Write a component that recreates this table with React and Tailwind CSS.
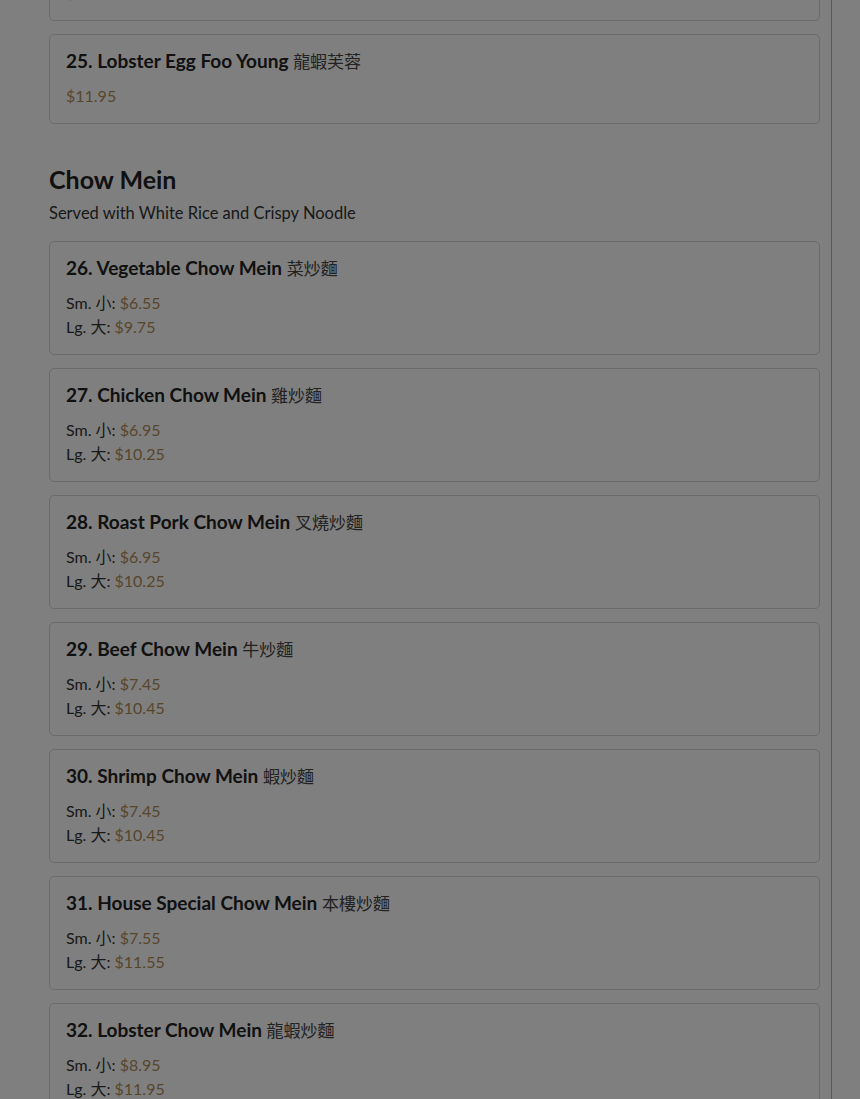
const items = [
  { no: 26, name: 'Vegetable Chow Mein', zh: '菜炒麵', sm: '$6.55', lg: '$9.75' },
  { no: 27, name: 'Chicken Chow Mein', zh: '雞炒麵', sm: '$6.95', lg: '$10.25' },
  { no: 28, name: 'Roast Pork Chow Mein', zh: '叉燒炒麵', sm: '$6.95', lg: '$10.25' },
  { no: 29, name: 'Beef Chow Mein', zh: '牛炒麵', sm: '$7.45', lg: '$10.45' },
  { no: 30, name: 'Shrimp Chow Mein', zh: '蝦炒麵', sm: '$7.45', lg: '$10.45' },
  { no: 31, name: 'House Special Chow Mein', zh: '本樓炒麵', sm: '$7.55', lg: '$11.55' },
  { no: 32, name: 'Lobster Chow Mein', zh: '龍蝦炒麵', sm: '$8.95', lg: '$11.95' },
]

function Card({ children }) {
  return (
    <div className="rounded-[5px] border border-[#d6d6d6] bg-white px-4 pt-[14px] pb-[15px]">{children}</div>
  )
}

function Title({ no, name, zh }) {
  return (
    <h3 className="text-[19px] font-bold leading-[24px] text-[#222]">
      {no}. {name} <span className="text-[17px] font-normal text-[#444]">{zh}</span>
    </h3>
  )
}

export default function App() {
  return (
    <div className="relative h-[1099px] overflow-hidden bg-white" style={{ fontFamily: 'Lato, "Noto Sans CJK TC", sans-serif' }}>
      <div className="flex h-full w-[832px] flex-col border-r border-[#b4b4b4] pl-[49px] pr-[11px]">
        <div className="-mt-[69px] flex flex-col gap-[13px]">
          <Card>
            <Title no={24} name="Shrimp Egg Foo Young" zh="蝦芙蓉" />
            <p className="mt-[10px] text-[16px] leading-[24px] text-[#b08d57]">$9.95</p>
          </Card>
          <Card>
            <Title no={25} name="Lobster Egg Foo Young" zh="龍蝦芙蓉" />
            <p className="mt-[10px] text-[16px] leading-[24px] text-[#b08d57]">$11.95</p>
          </Card>
        </div>

        <h2 className="mt-[40px] text-[25px] font-bold leading-[30px] text-[#222]">Chow Mein</h2>
        <p className="mt-[7px] text-[16.5px] leading-[24px] text-[#333]">Served with White Rice and Crispy Noodle</p>

        <div className="mt-[16px] flex flex-col gap-[13px]">
          {items.map(it => (
            <Card key={it.no}>
              <Title no={it.no} name={it.name} zh={it.zh} />
              <div className="mt-[10px] text-[16px] leading-[24px] text-[#333]">
                <p>Sm. 小: <span className="text-[#b08d57]">{it.sm}</span></p>
                <p>Lg. 大: <span className="text-[#b08d57]">{it.lg}</span></p>
              </div>
            </Card>
          ))}
        </div>
      </div>
      <div className="absolute inset-0 bg-black/50" />
    </div>
  )
}
